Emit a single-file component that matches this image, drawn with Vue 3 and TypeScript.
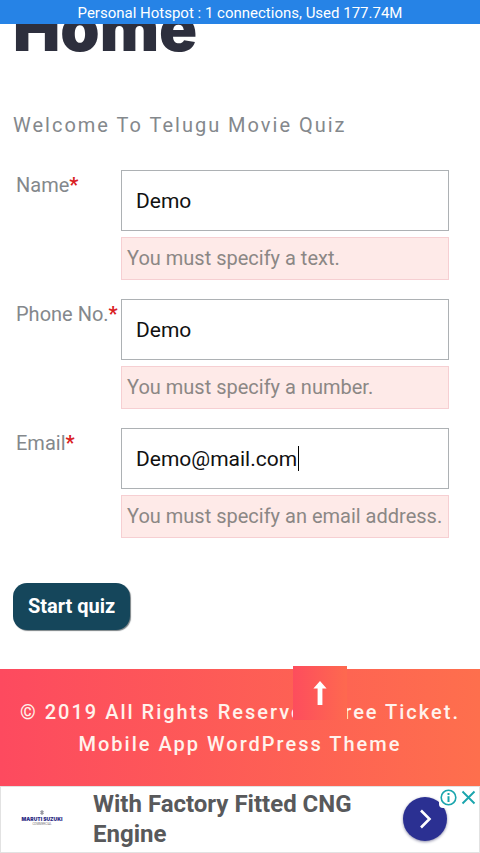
<script setup lang="ts">
import { reactive } from 'vue'

interface Field {
  id: string
  label: string
  type: string
  value: string
  error: string
  active: boolean
}

const fields = reactive<Field[]>([
  { id: 'name', label: 'Name', type: 'text', value: 'Demo', error: 'You must specify a text.', active: false },
  { id: 'phone', label: 'Phone No.', type: 'text', value: 'Demo', error: 'You must specify a number.', active: false },
  { id: 'email', label: 'Email', type: 'email', value: 'Demo@mail.com', error: 'You must specify an email address.', active: true },
])

function toTop(): void {
  window.scrollTo({ top: 0, behavior: 'smooth' })
}
</script>

<template>
  <div class="screen">
    <div class="hotspot">Personal Hotspot : 1 connections, Used 177.74M</div>

    <main class="content">
      <h1 class="title">Home</h1>
      <p class="welcome">Welcome To Telugu Movie Quiz</p>

      <form novalidate @submit.prevent>
        <div v-for="field in fields" :key="field.id" class="row">
          <label class="label" :for="field.id">{{ field.label }}<span class="star">*</span></label>
          <div class="control">
            <div class="box">
              <input :id="field.id" v-model="field.value" class="input" :type="field.type" :aria-describedby="field.id + '-error'" />
              <span v-if="field.active" class="caret"></span>
            </div>
            <p :id="field.id + '-error'" class="error">{{ field.error }}</p>
          </div>
        </div>
        <button class="start" type="submit">Start quiz</button>
      </form>
    </main>

    <footer class="footer">
      <p class="copyright">© 2019 All Rights Reserved. Free Ticket. Mobile App WordPress Theme</p>
      <button class="to-top" type="button" aria-label="Back to top" @click="toTop">
        <svg width="14" height="24" viewBox="0 0 14 24">
          <path d="M7 0 13.6 7.6H9.4V24H4.6V7.6H0.4Z" fill="#fff" />
        </svg>
      </button>
    </footer>

    <aside class="ad">
      <div class="brand">
        <svg class="emblem" width="4" height="5" viewBox="0 0 4 5">
          <path d="M2 0 4 1.5 3 2.5 4 3.5 2 5 0 3.5 1 2.5 0 1.5Z" fill="#9a9aa2" />
        </svg>
        <span class="brand-name">MARUTI SUZUKI</span>
        <span class="brand-sub">COMMERCIAL</span>
      </div>
      <a class="headline" href="#">With Factory Fitted CNG Engine</a>
      <button class="go" type="button" aria-label="Open">
        <svg width="44" height="44" viewBox="0 0 44 44">
          <path d="M18 13.5 26.5 22 18 30.5" fill="none" stroke="#fff" stroke-width="2.6" />
        </svg>
      </button>
      <div class="choices">
        <button class="choice" type="button" aria-label="Ad information">
          <svg width="17" height="17" viewBox="0 0 17 17" fill="none" stroke="#1aa5ad">
            <circle cx="8.5" cy="8.5" r="7.3" stroke-width="1.6" />
            <path d="M8.5 7.2V13" stroke-width="2" />
            <path d="M8.5 4V6" stroke-width="2" />
          </svg>
        </button>
        <button class="choice" type="button" aria-label="Close ad">
          <svg width="17" height="17" viewBox="0 0 17 17" fill="none" stroke="#1aa5ad" stroke-width="1.9">
            <path d="M2.5 2.5 14.5 14.5M14.5 2.5 2.5 14.5" />
          </svg>
        </button>
      </div>
    </aside>
  </div>
</template>

<style>
body {
  background: #fff;
}
</style>

<style scoped>
.screen {
  font-family: Roboto, "Liberation Sans", sans-serif;
  color: #84888c;
  overflow: hidden;
}

.hotspot {
  position: relative;
  z-index: 1;
  box-sizing: border-box;
  height: 24px;
  padding-top: 2px;
  background: #2683e6;
  color: #fff;
  font-size: 15px;
  line-height: 22px;
  text-align: center;
}

.content {
  padding: 0 31px 39px 13px;
}

.title {
  margin: -36px 0 0;
  color: #2d2f3d;
  font-family: Inter, "Liberation Sans", sans-serif;
  font-size: 63px;
  font-weight: 900;
  line-height: 80px;
}

.welcome {
  margin: 41px 0 29px;
  font-size: 20px;
  line-height: 32px;
  letter-spacing: 2px;
}

.row {
  display: grid;
  grid-template-columns: 108px minmax(0, 1fr);
  margin-bottom: 19px;
}

.label {
  padding-left: 3px;
  font-size: 20px;
  line-height: 30px;
  white-space: nowrap;
}

.star {
  color: #d9201e;
  font-weight: 700;
}

.box {
  position: relative;
}

.input {
  display: block;
  box-sizing: border-box;
  width: 100%;
  height: 61px;
  padding: 0 14px;
  border: 1px solid #adb1b4;
  border-radius: 0;
  outline: none;
  background: #fff;
  color: #111;
  font-family: inherit;
  font-size: 21px;
}

.caret {
  position: absolute;
  top: 18px;
  left: 177px;
  width: 1px;
  height: 25px;
  background: #000;
}

.error {
  box-sizing: border-box;
  margin: 6px 0 0;
  padding: 6px 5px;
  border: 1px solid #f6cfd2;
  background: #feeae8;
  color: #8b8785;
  font-size: 20px;
  line-height: 29px;
  white-space: nowrap;
}

.start {
  display: block;
  height: 47px;
  margin-top: 45px;
  padding: 0 15px 2px;
  border: 0;
  border-radius: 14px;
  background: #15465b;
  box-shadow: 1px 1px 1px #7b8286;
  color: #fff;
  font-family: inherit;
  font-size: 20px;
  font-weight: 700;
}

.footer {
  position: relative;
  padding: 27px 16px 26px;
  background: linear-gradient(90deg, #fd4a5f, #fe6f4d);
}

.copyright {
  margin: 0;
  color: #fff2ec;
  font-size: 20px;
  font-weight: 500;
  line-height: 32px;
  letter-spacing: 2px;
  text-align: center;
}

.to-top {
  position: absolute;
  top: -3px;
  right: 133px;
  display: grid;
  place-items: center;
  width: 54px;
  height: 54px;
  padding: 0;
  border: 0;
  background: linear-gradient(90deg, #fd4d5d, #fe694f);
}

.ad {
  position: relative;
  display: flex;
  align-items: center;
  box-sizing: border-box;
  min-height: 67px;
  padding: 0 32px 2px 0;
  border: 1px solid #e2e2e2;
  background: #fff;
}

.brand {
  display: flex;
  flex: none;
  flex-direction: column;
  align-items: center;
  width: 82px;
  color: #2c2c84;
}

.brand-name {
  margin-top: 1px;
  font-family: Inter, "Liberation Sans", sans-serif;
  font-size: 5px;
  font-weight: 900;
  line-height: 6px;
}

.brand-sub {
  font-size: 3px;
  line-height: 5px;
  color: #777;
}

.headline {
  flex: 1;
  padding-left: 10px;
  color: #58595b;
  font-size: 24px;
  font-weight: 700;
  line-height: 30px;
  text-decoration: none;
}

.go {
  flex: none;
  width: 44px;
  height: 44px;
  padding: 0;
  border: 0;
  border-radius: 50%;
  background: #2b3092;
  box-shadow: 0 1px 3px #8c8ca8;
}

.choices {
  position: absolute;
  top: 0;
  right: 0;
  display: flex;
  gap: 3px;
  padding: 2px 2px 2px 1px;
  border-bottom-left-radius: 4px;
  background: #fff;
}

.choice {
  display: block;
  width: 17px;
  height: 17px;
  padding: 0;
  border: 0;
  background: none;
}

.choice svg,
.go svg,
.to-top svg {
  display: block;
}
</style>
